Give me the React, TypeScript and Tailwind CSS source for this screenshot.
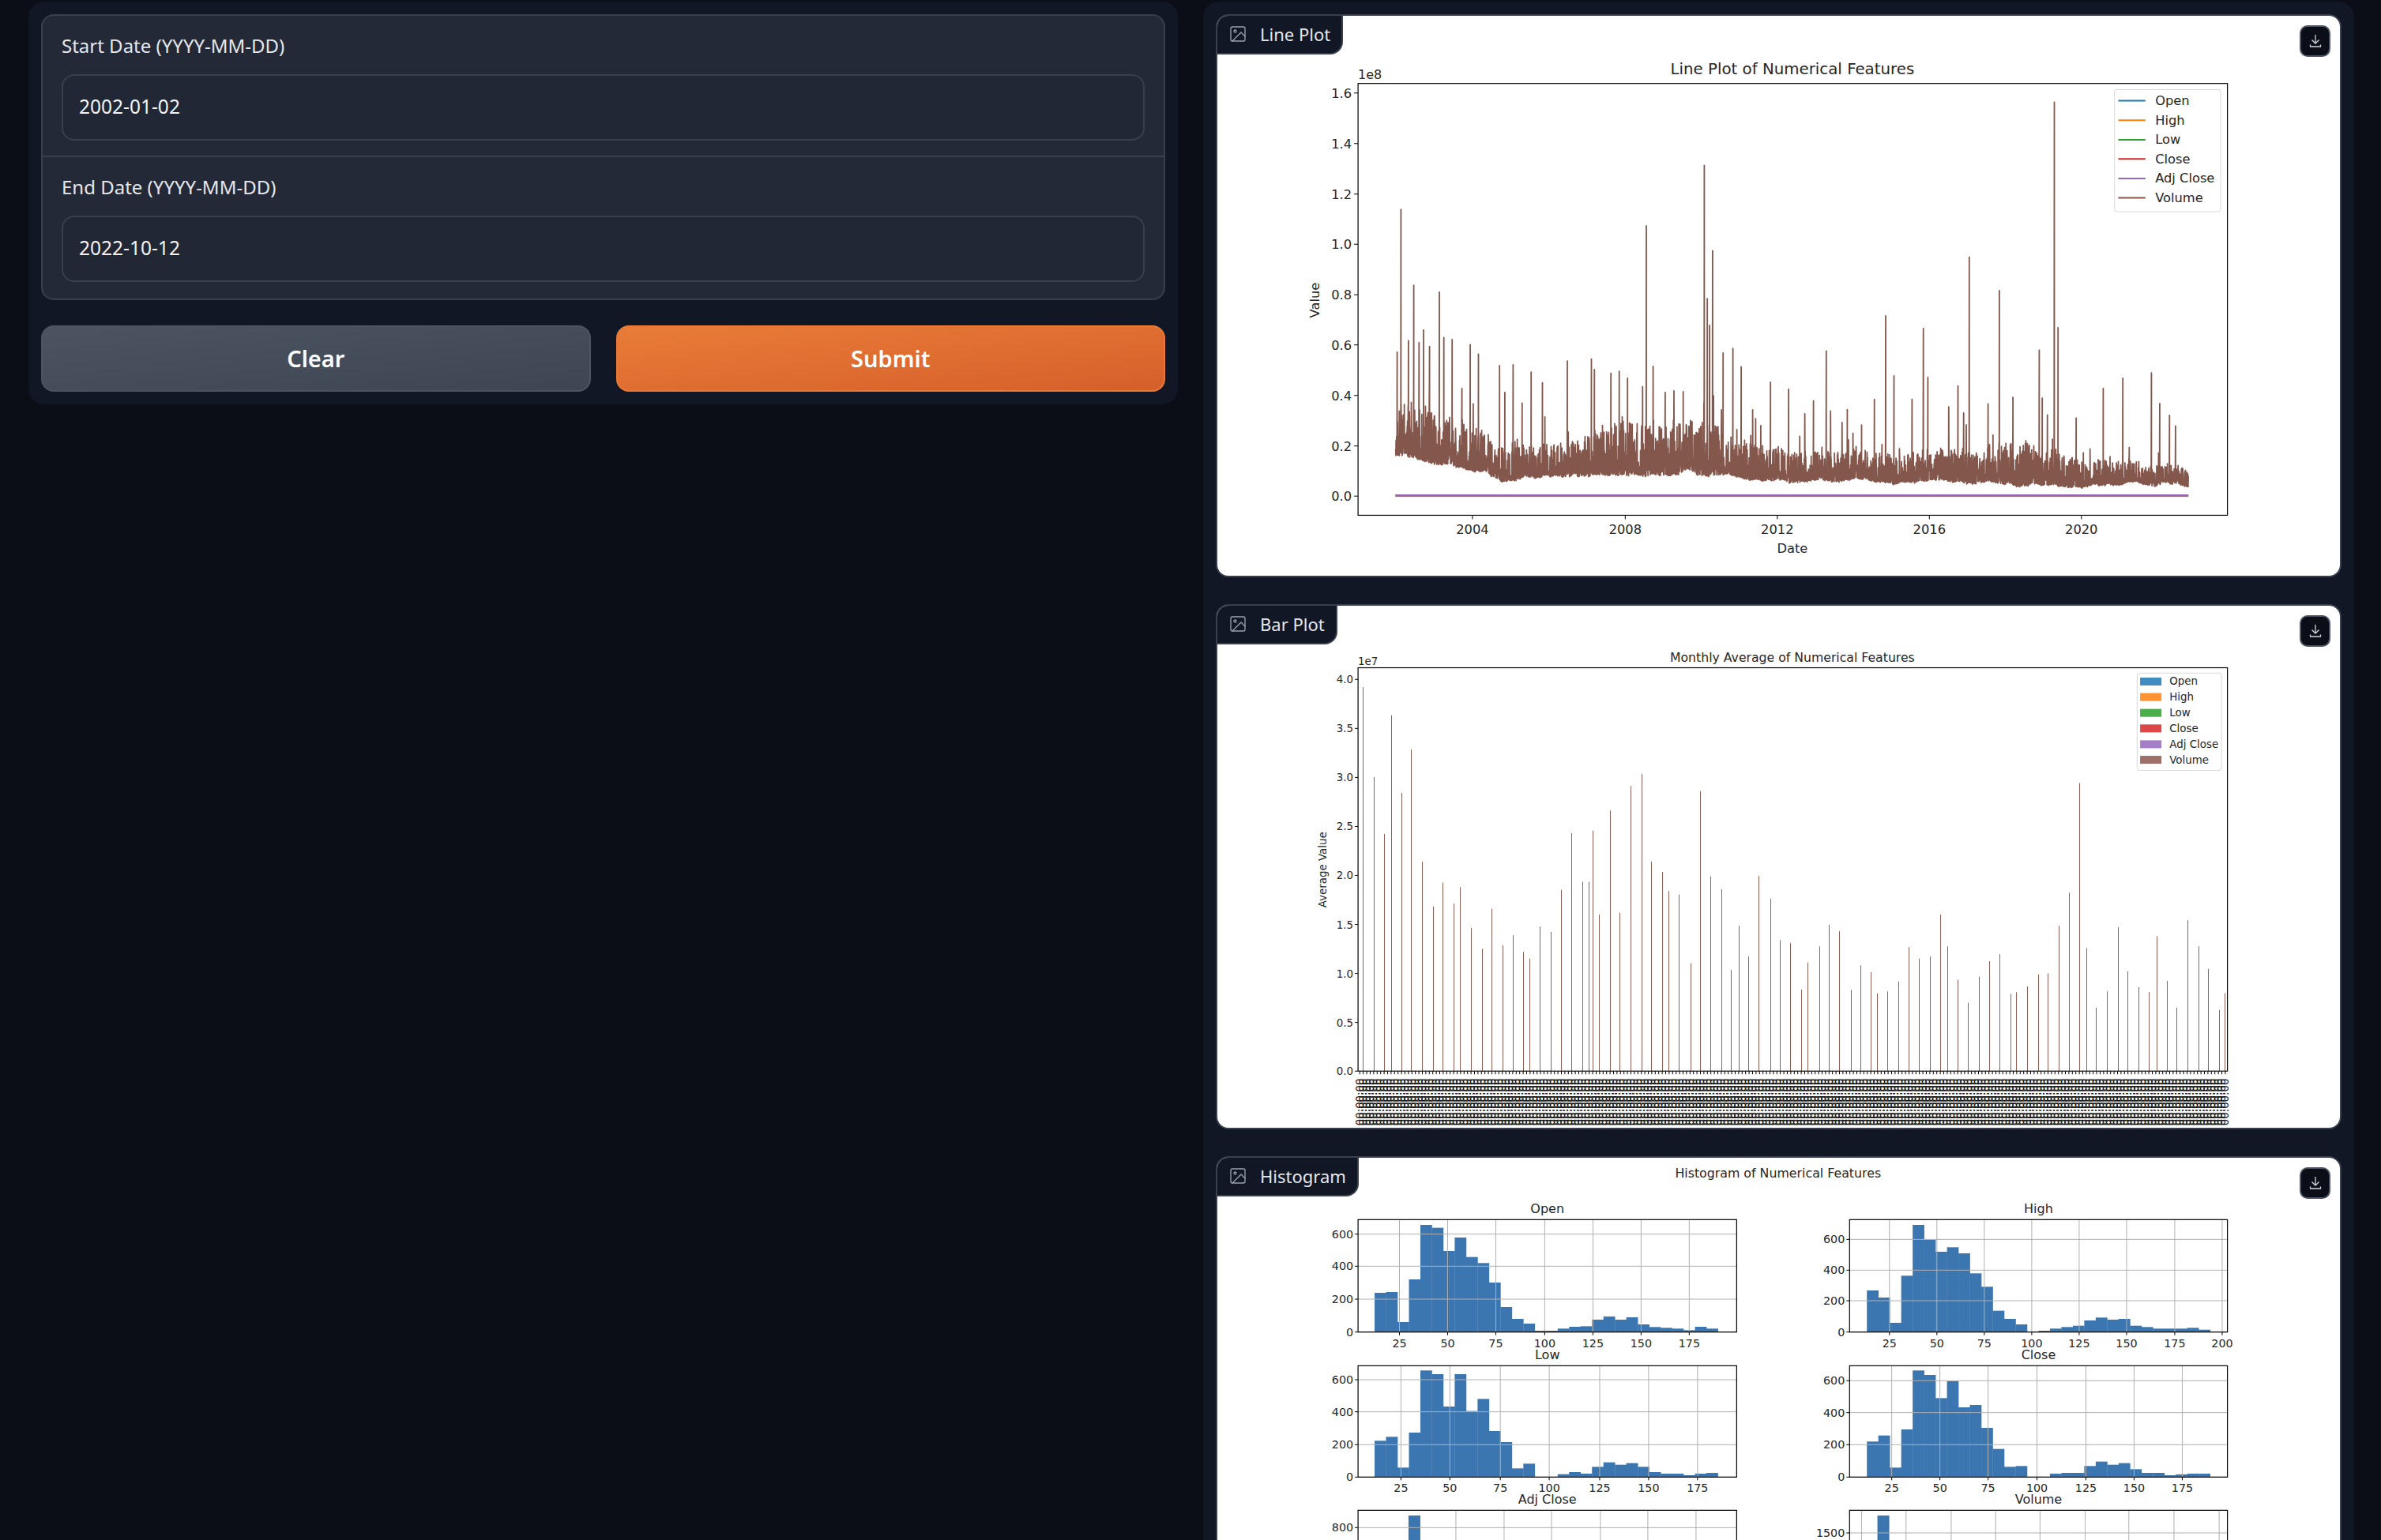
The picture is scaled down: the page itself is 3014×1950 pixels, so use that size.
const font = "font-['DejaVu_Sans',sans-serif]";

// horizontal read-offs for the plots are all in the same crop scale
const px = (z: number) => z / 1.0495 - 22;
const lineY = (z: number) => z / 2.063 - 20;
const barY = (z: number) => z / 2.24 - 17;
const histY = (z: number) => z / 3 - 26;

const seriesColors = ["#1f77b4", "#ff7f0e", "#2ca02c", "#d62728", "#9467bd", "#8c564b"];
const seriesNames = ["Open", "High", "Low", "Close", "Adj Close", "Volume"];

function makeRandom(seed: number) {
  let s = seed;
  return () => {
    s = (s + 0x6d2b79f5) | 0;
    let t = Math.imul(s ^ (s >>> 15), 1 | s);
    t = (t + Math.imul(t ^ (t >>> 7), 61 | t)) ^ t;
    return ((t ^ (t >>> 14)) >>> 0) / 4294967296;
  };
}

const band = [
  [260, 1060, 1190], [350, 1100, 1220], [400, 1170, 1255], [480, 1170, 1245],
  [560, 1110, 1245], [650, 1110, 1235], [700, 1130, 1235], [780, 1180, 1255],
  [900, 1190, 1260], [1000, 1180, 1260], [1100, 1160, 1265], [1180, 1200, 1265], [1313, 1220, 1262],
];

const spikes = [
  [262, 920], [267, 547], [277, 890], [284, 745], [291, 895], [297, 862], [305, 905], [318, 763], [324, 882],
  [335, 887], [348, 1015], [359, 900], [370, 925], [398, 955], [405, 1025], [416, 953], [428, 1053], [440, 972],
  [455, 1000], [488, 943], [520, 938], [524, 965], [546, 975], [557, 970], [568, 988], [588, 1010], [593, 590],
  [602, 957], [618, 1025], [642, 1023], [670, 432], [674, 780], [677, 850], [681, 655], [695, 922], [708, 910],
  [719, 958], [758, 998], [782, 1017], [815, 1047], [832, 917], [860, 1070], [879, 1110], [896, 1043], [911, 825],
  [922, 982], [946, 1043], [961, 858], [967, 986], [1007, 1008], [1022, 672], [1047, 1055], [1062, 759], [1080, 1038],
  [1115, 915], [1119, 1040], [1135, 267], [1140, 856], [1164, 1092], [1200, 1015], [1226, 988], [1264, 974],
  [1275, 1054], [1288, 1085], [1296, 1113],
];

function volumePoints() {
  const rand = makeRandom(42);
  const pts: string[] = [];
  let next = 0;
  let slow = 0;
  for (let z = 260; z <= 1313; z += 0.25) {
    while (next < spikes.length && spikes[next][0] <= z) {
      pts.push(`${px(spikes[next][0]).toFixed(1)},${lineY(spikes[next][1]).toFixed(1)}`);
      next++;
    }
    let i = 0;
    while (i < band.length - 2 && band[i + 1][0] < z) i++;
    const a = band[i];
    const b = band[i + 1];
    const t = (z - a[0]) / (b[0] - a[0]);
    const top = a[1] + (b[1] - a[1]) * t;
    const bottom = a[2] + (b[2] - a[2]) * t;
    // slow drift moves the whole band, the rest is day to day noise
    slow = 0.99 * slow + 0.01 * (rand() - 0.5) * 2;
    let y = bottom + slow * 120 - (bottom - top) * Math.pow(rand(), 2.6) * 1.05;
    if (rand() < 0.018) y = top - rand() * rand() * 130;
    if (y > bottom + 16) y = bottom + 16 - rand() * 8;
    pts.push(`${px(z).toFixed(1)},${lineY(y).toFixed(1)}`);
  }
  return pts.join(" ");
}

const monthlyBars = [
  [217, 269], [231, 524], [245, 685], [254, 349], [268, 569], [281, 446], [295, 764], [310, 891], [323, 823], [337, 883],
  [346, 836], [360, 952], [375, 1011], [388, 897], [402, 1001], [416, 973], [430, 1020], [438, 1039], [452, 948], [466, 963],
  [480, 844], [494, 683], [508, 821], [517, 821], [522, 676], [531, 914], [545, 619], [558, 909], [573, 549], [587, 515],
  [600, 764], [614, 793], [623, 847], [637, 857], [652, 1052], [665, 564], [679, 806], [693, 842], [706, 1071], [716, 946],
  [729, 1033], [743, 804], [758, 869], [771, 987], [785, 995], [799, 1127], [808, 1050], [823, 1004], [836, 943], [850, 961],
  [865, 1128], [878, 1058], [892, 1077], [900, 1138], [914, 1132], [928, 1104], [942, 1006], [956, 1039], [970, 1033], [984, 914],
  [993, 1004], [1007, 1099], [1021, 1164], [1035, 1090], [1049, 1046], [1063, 1026], [1077, 1139], [1085, 1134], [1099, 1118], [1114, 1084],
  [1127, 1081], [1141, 946], [1155, 852], [1169, 541], [1178, 1009], [1191, 1178], [1205, 1132], [1220, 950], [1233, 1075], [1247, 1120],
  [1261, 1134], [1271, 975], [1285, 1102], [1298, 1178], [1312, 930], [1327, 1004], [1340, 1068], [1354, 1185], [1362, 1137],
];

const histograms = [
  {
    title: "Open", x0: 210, x1: 713, top: 313, base: 740, start: 232, bin: 15.2,
    bars: [591, 588, 702, 540, 333, 344, 432, 381, 455, 478, 552, 645, 690, 708, 735, 735, 727, 720, 718, 693, 681, 693, 684, 711, 721, 724, 727, 733, 720, 727],
    xt: [["25", 265], ["50", 329], ["75", 393], ["100", 458], ["125", 522], ["150", 586], ["175", 650]],
    yt: [["600", 368], ["400", 490], ["200", 615], ["0", 740]],
  },
  {
    title: "High", x0: 863, x1: 1365, top: 313, base: 740, start: 886, bin: 15.2,
    bars: [582, 609, 705, 526, 333, 389, 435, 418, 441, 517, 568, 659, 690, 711, 740, 735, 727, 721, 716, 696, 685, 693, 690, 716, 721, 727, 727, 727, 724, 731],
    xt: [["25", 916], ["50", 979], ["75", 1042], ["100", 1105], ["125", 1168], ["150", 1231], ["175", 1295], ["200", 1358]],
    yt: [["600", 388], ["400", 505], ["200", 621], ["0", 740]],
  },
  {
    title: "Low", x0: 210, x1: 713, top: 868, base: 1291, start: 232, bin: 15.2,
    bars: [1153, 1138, 1255, 1122, 886, 900, 1023, 900, 1040, 994, 1116, 1158, 1258, 1240, 1291, 1291, 1280, 1272, 1278, 1252, 1235, 1244, 1238, 1252, 1272, 1278, 1278, 1284, 1278, 1275],
    xt: [["25", 267], ["50", 332], ["75", 399], ["100", 464], ["125", 531], ["150", 596], ["175", 661]],
    yt: [["600", 921], ["400", 1043], ["200", 1168], ["0", 1291]],
  },
  {
    title: "Close", x0: 863, x1: 1365, top: 868, base: 1291, start: 886, bin: 15.2,
    bars: [1156, 1133, 1255, 1110, 886, 903, 991, 926, 1026, 1017, 1104, 1184, 1252, 1249, 1291, 1291, 1278, 1275, 1275, 1249, 1232, 1244, 1238, 1261, 1275, 1275, 1284, 1281, 1278, 1278],
    xt: [["25", 919], ["50", 983], ["75", 1047], ["100", 1112], ["125", 1177], ["150", 1241], ["175", 1305]],
    yt: [["600", 925], ["400", 1046], ["200", 1168], ["0", 1291]],
  },
];

function ImageIcon() {
  return (
    <svg viewBox="0 0 24 24" fill="none" stroke="currentColor" strokeWidth="1.3" strokeLinecap="round" strokeLinejoin="round" className="w-[24px] h-[24px] text-[#9ca3af]">
      <rect x="3" y="3" width="18" height="18" rx="2" />
      <circle cx="8.5" cy="8.5" r="1.5" />
      <polyline points="21 15 16 10 5 21" />
    </svg>
  );
}

function DownloadIcon() {
  return (
    <svg viewBox="0 0 16 18" fill="none" stroke="currentColor" strokeWidth="1.3" className="w-[16px] h-[18px] text-[#d1d5db]">
      <path d="M8 1v11M3.5 7.5 8 12l4.5-4.5" />
      <path d="M1.5 13.5v2.5h13v-2.5" />
    </svg>
  );
}

function PlotCard({ label, height, children }: { label: string; height: string; children: React.ReactNode }) {
  return (
    <div className={`relative bg-white border-2 border-[#393f4c] rounded-[16px] overflow-hidden ${height}`}>
      <div className="absolute left-0 top-0 h-[49px] pl-[14px] pr-[14px] pb-[2px] flex items-center gap-[16px] bg-[#111725] border-r-2 border-b-2 border-[#393f4c] rounded-br-[16px]">
        <ImageIcon />
        <span className="text-[22px] leading-none text-[#e5e7eb] font-['Noto_Sans',sans-serif]">{label}</span>
      </div>
      <button className="absolute right-[12px] top-[12px] w-[39px] h-[40px] flex items-center justify-center bg-[#0b0e17] border-2 border-[#4b5563] rounded-[10px]">
        <DownloadIcon />
      </button>
      {children}
    </div>
  );
}

function LinePlot() {
  const left = px(210);
  const right = px(1365);
  const top = lineY(218);
  const bottom = lineY(1346);
  const yTicks = [["1.6", 243], ["1.4", 375], ["1.2", 507], ["1.0", 638], ["0.8", 770], ["0.6", 901], ["0.4", 1033], ["0.2", 1165], ["0.0", 1296]] as const;
  const xTicks = [["2004", 362], ["2008", 565], ["2012", 767], ["2016", 969], ["2020", 1171]] as const;
  const rows = [263, 314, 365, 415, 466, 517];
  return (
    <svg width="1418" height="709" className={`block ${font}`} fill="#262626">
      <text x={px(787)} y={lineY(194)} fontSize="19.8" textAnchor="middle">Line Plot of Numerical Features</text>
      <text x={left} y={lineY(206)} fontSize="16">1e8</text>
      {seriesColors.slice(0, 5).map((c) => (
        <line key={c} x1={px(260)} x2={px(1313)} y1={lineY(1294)} y2={lineY(1294)} stroke={c} strokeWidth="2.5" />
      ))}
      <polyline points={volumePoints()} fill="none" stroke="#84574c" strokeWidth="1.8" strokeLinejoin="round" />
      <rect x={left} y={top} width={right - left} height={bottom - top} fill="none" stroke="#000" strokeWidth="1.2" />
      {yTicks.map(([t, z]) => (
        <g key={t}>
          <line x1={left - 5} x2={left} y1={lineY(z)} y2={lineY(z)} stroke="#000" />
          <text x={left - 8} y={lineY(z) + 6} fontSize="16.3" textAnchor="end">{t}</text>
        </g>
      ))}
      {xTicks.map(([t, z]) => (
        <g key={t}>
          <line x1={px(z)} x2={px(z)} y1={bottom} y2={bottom + 5} stroke="#000" />
          <text x={px(z)} y={bottom + 24} fontSize="16.3" textAnchor="middle">{t}</text>
        </g>
      ))}
      <text x={px(787)} y={lineY(1431) + 6} fontSize="16.3" textAnchor="middle">Date</text>
      <text transform={`translate(${px(158)} ${lineY(784)}) rotate(-90)`} fontSize="16.3" textAnchor="middle">Value</text>
      <rect x={px(1215)} y={lineY(234)} width={px(1356) - px(1215)} height={lineY(553) - lineY(234)} rx="3" fill="#fff" fillOpacity="0.8" stroke="#d9d9d9" />
      {seriesNames.map((name, i) => (
        <g key={name}>
          <line x1={px(1220)} x2={px(1256)} y1={lineY(rows[i])} y2={lineY(rows[i])} stroke={seriesColors[i]} strokeWidth="2" />
          <text x={px(1269)} y={lineY(rows[i]) + 5.5} fontSize="16.3">{name}</text>
        </g>
      ))}
    </svg>
  );
}

function BarPlot() {
  const left = px(210);
  const right = px(1365);
  const top = barY(214);
  const bottom = barY(1358);
  const yTicks = [["4.0", 247], ["3.5", 386], ["3.0", 525], ["2.5", 664], ["2.0", 803], ["1.5", 942], ["1.0", 1081], ["0.5", 1220], ["0.0", 1358]] as const;
  const rows = [253, 297, 342, 386, 431, 475];
  const months = Array.from({ length: 250 }, (_, i) => left + 2.2 + i * 4.4);
  return (
    <svg width="1418" height="660" className={`block ${font}`} fill="#262626">
      <text x={px(787)} y={barY(196)} fontSize="15.7" textAnchor="middle">Monthly Average of Numerical Features</text>
      <text x={left} y={barY(205)} fontSize="13.4">1e7</text>
      {monthlyBars.map(([x, y]) => (
        <line key={x} x1={Math.floor(px(x)) + 0.5} x2={Math.floor(px(x)) + 0.5} y1={barY(y)} y2={bottom} stroke="#8c564b" strokeOpacity="0.95" strokeWidth="1" />
      ))}
      <rect x={left} y={top} width={right - left} height={bottom - top} fill="none" stroke="#000" strokeWidth="1.2" />
      {yTicks.map(([t, z]) => (
        <g key={t}>
          <line x1={left - 4} x2={left} y1={barY(z)} y2={barY(z)} stroke="#000" />
          <text x={left - 6} y={barY(z) + 5} fontSize="13.4" textAnchor="end">{t}</text>
        </g>
      ))}
      {months.map((x) => (
        <g key={x}>
          <line x1={x} x2={x} y1={bottom} y2={bottom + 4} stroke="#000" />
          <text transform={`translate(${x + 4.5} ${bottom + 69}) rotate(-90)`} fontSize="13.3" fill="#1a1a1a">00:00:00</text>
        </g>
      ))}
      <text transform={`translate(${px(168)} ${barY(787)}) rotate(-90)`} fontSize="13.4" textAnchor="middle">Average Value</text>
      <rect x={px(1245)} y={barY(229)} width={px(1357) - px(1245)} height={barY(505) - barY(229)} rx="3" fill="#fff" fillOpacity="0.8" stroke="#d9d9d9" />
      {seriesNames.map((name, i) => (
        <g key={name}>
          <rect x={px(1249)} y={barY(rows[i]) - 5} width="27" height="10" fill={seriesColors[i]} fillOpacity="0.85" />
          <text x={px(1288)} y={barY(rows[i]) + 4.5} fontSize="13.4">{name}</text>
        </g>
      ))}
    </svg>
  );
}

function Histogram({ h }: { h: (typeof histograms)[number] }) {
  const center = (px(h.x0) + px(h.x1)) / 2;
  const left = px(h.x0);
  const right = px(h.x1);
  const top = histY(h.top);
  const base = histY(h.base);
  return (
    <g>
      <text x={center} y={top - 8} fontSize="16" textAnchor="middle">{h.title}</text>
      {h.bars.map((y, i) => (
        <rect key={i} x={px(h.start + i * h.bin)} y={histY(y)} width={h.bin / 1.0495 + 0.3} height={base - histY(y)} fill="#3b76b0" />
      ))}
      {h.xt.map(([t, z]) => (
        <line key={t} x1={px(+z)} x2={px(+z)} y1={top} y2={base} stroke="#b0b0b0" />
      ))}
      {h.yt.map(([t, z]) => (
        <line key={t} x1={left} x2={right} y1={histY(+z)} y2={histY(+z)} stroke="#b0b0b0" />
      ))}
      <rect x={left} y={top} width={right - left} height={base - top} fill="none" stroke="#000" strokeWidth="1.2" />
      {h.xt.map(([t, z]) => (
        <g key={t}>
          <line x1={px(+z)} x2={px(+z)} y1={base} y2={base + 4} stroke="#000" />
          <text x={px(+z)} y={base + 19} fontSize="14.3" textAnchor="middle">{t}</text>
        </g>
      ))}
      {h.yt.map(([t, z]) => (
        <g key={t}>
          <line x1={left - 4} x2={left} y1={histY(+z)} y2={histY(+z)} stroke="#000" />
          <text x={left - 6} y={histY(+z) + 5} fontSize="14.3" textAnchor="end">{t}</text>
        </g>
      ))}
    </g>
  );
}

function HistogramPlot() {
  const lastRow = [
    { title: "Adj Close", x0: 210, x1: 713, bar: 277, grid: [340, 404, 467, 532, 595, 659], tick: ["800", 1483] as const },
    { title: "Volume", x0: 863, x1: 1365, bar: 900, grid: [879, 938, 998, 1057, 1116, 1176, 1234, 1294, 1354], tick: ["1500", 1503] as const },
  ];
  return (
    <svg width="1418" height="520" className={`block ${font}`} fill="#262626">
      <text x={px(768)} y={histY(148) + 2} fontSize="15.8" textAnchor="middle">Histogram of Numerical Features</text>
      {histograms.map((h) => (
        <Histogram key={h.title} h={h} />
      ))}
      {lastRow.map((r) => (
        <g key={r.title}>
          <text x={(px(r.x0) + px(r.x1)) / 2} y={histY(1417) - 8} fontSize="16" textAnchor="middle">{r.title}</text>
          <rect x={px(r.bar)} y={histY(1437)} width="15" height="60" fill="#3b76b0" />
          {r.grid.map((g) => (
            <line key={g} x1={px(g)} x2={px(g)} y1={histY(1417)} y2={520} stroke="#b0b0b0" />
          ))}
          <line x1={px(r.x0)} x2={px(r.x1)} y1={histY(r.tick[1])} y2={histY(r.tick[1])} stroke="#b0b0b0" />
          <line x1={px(r.x0) - 4} x2={px(r.x0)} y1={histY(r.tick[1])} y2={histY(r.tick[1])} stroke="#000" />
          <text x={px(r.x0) - 6} y={histY(r.tick[1]) + 5} fontSize="14.3" textAnchor="end">{r.tick[0]}</text>
          <path d={`M${px(r.x0)} 520V${histY(1417)}H${px(r.x1)}V520`} fill="none" stroke="#000" strokeWidth="1.2" />
        </g>
      ))}
    </svg>
  );
}

function DateField({ label, value }: { label: string; value: string }) {
  return (
    <div className="h-[179px] px-[24px] pt-[26px]">
      <div className="h-[24px] flex items-center text-[24px] text-[#e5e7eb]">{label}</div>
      <input
        readOnly
        value={value}
        className="mt-[24px] w-full h-[84px] px-[20px] pb-[4px] text-[24.5px] text-[#f3f4f6] bg-[#212735] border-2 border-[#393f4c] rounded-[16px] outline-none"
      />
    </div>
  );
}

export default function App() {
  return (
    <div className="h-[1950px] overflow-hidden flex items-start gap-[32px] pl-[36px] pr-[34px] pt-[2px] bg-[#0b0e17] font-['Noto_Sans',sans-serif]">
      <div className="w-[1455px] shrink-0 p-[16px] flex flex-col gap-[32px] bg-[#111725] rounded-[20px]">
        <div className="bg-[#232936] border-2 border-[#393f4c] rounded-[16px] divide-y-2 divide-[#393f4c]">
          <DateField label="Start Date (YYYY-MM-DD)" value="2002-01-02" />
          <DateField label="End Date (YYYY-MM-DD)" value="2022-10-12" />
        </div>
        <div className="flex gap-[32px]">
          <button className="flex-1 h-[84px] text-[29px] font-semibold text-white bg-linear-to-br from-[#4d5461] to-[#3e4653] border-2 border-[#4d5461] rounded-[16px]">
            Clear
          </button>
          <button className="flex-1 h-[84px] text-[29px] font-semibold text-white bg-linear-to-br from-[#e97c38] to-[#d65f2a] border-2 border-[#ea7a33] rounded-[16px]">
            Submit
          </button>
        </div>
      </div>
      <div className="flex-1 p-[16px] flex flex-col gap-[34px] bg-[#111725] rounded-[20px]">
        <PlotCard label="Line Plot" height="h-[713px]">
          <LinePlot />
        </PlotCard>
        <PlotCard label="Bar Plot" height="h-[665px]">
          <BarPlot />
        </PlotCard>
        <PlotCard label="Histogram" height="h-[700px]">
          <HistogramPlot />
        </PlotCard>
      </div>
    </div>
  );
}
